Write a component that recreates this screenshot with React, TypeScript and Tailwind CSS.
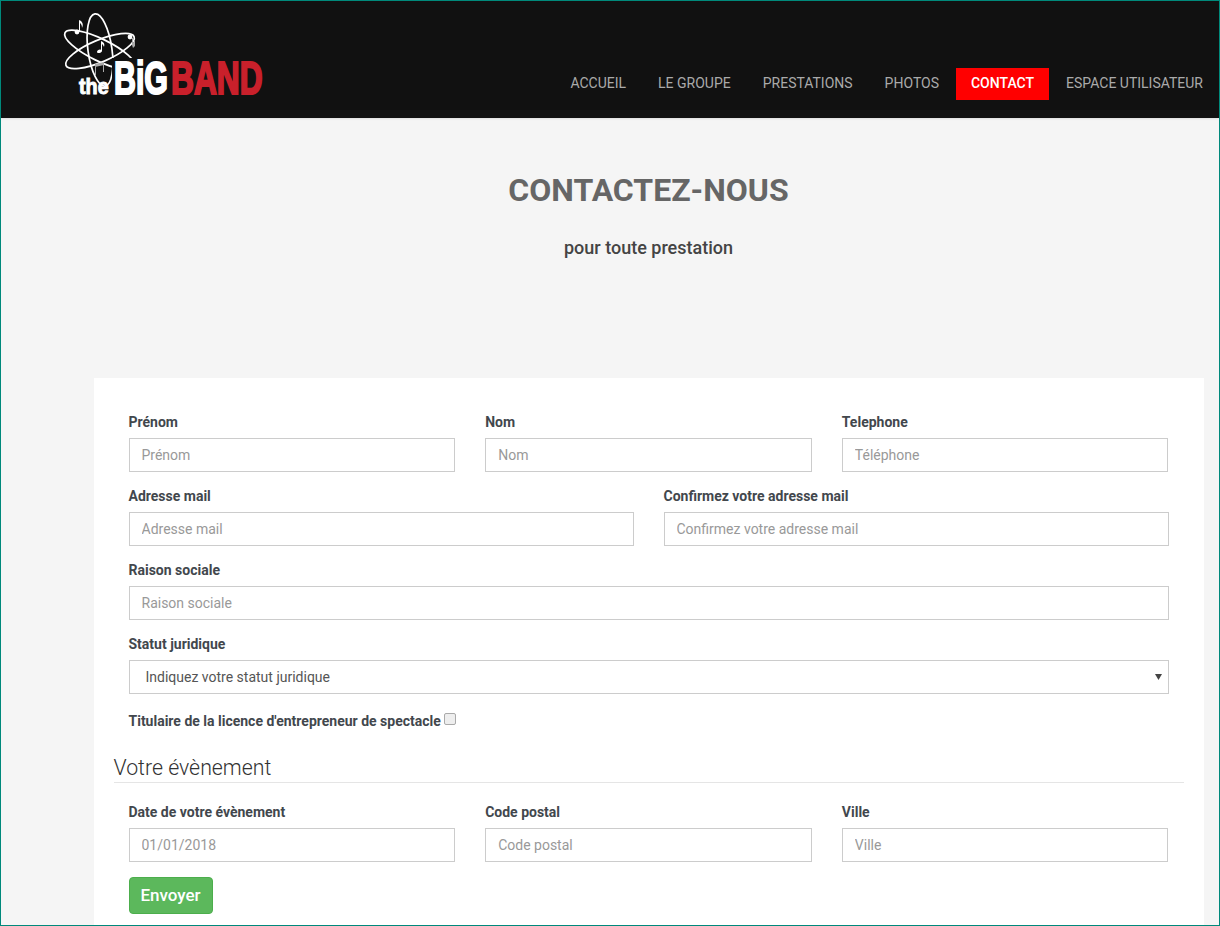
import React from "react";

const ROBOTO = "font-['Roboto',sans-serif]";

const navItems = ["Accueil", "Le groupe", "Prestations", "Photos", "Contact", "Espace utilisateur"];

// Atom + wordmark, the wordmark stays real text squeezed horizontally to the logo's widths
const Logo = () => (
  <svg width="210" height="100" viewBox="0 0 210 100" className="block" aria-label="the Big Band">
    <g fill="none" stroke="#fff" strokeWidth="1.7" transform="translate(-60 -8)">
      <ellipse cx="100" cy="50" rx="12" ry="36.5" transform="rotate(-8 100 50)" />
      <ellipse cx="100" cy="50" rx="39" ry="11" transform="rotate(26 100 50)" />
      <ellipse cx="100" cy="51" rx="37" ry="11" transform="rotate(-23 100 51)" />
    </g>
    <g fill="#fff" transform="translate(-60 -8)">
      <circle cx="77" cy="32" r="2.4" />
      <circle cx="130" cy="37" r="2.4" />
      <path d="M79 31 l0 -11 c3 1 5 4 3 8 c0 -3 -1 -4 -2 -5 l0 8 z" />
      <path d="M101 50 l0 -9 c3 1 4 3 3 6 c-1 -2 -1 -2 -2 -3 l0 7 c0 2 -5 3 -5 1 c0 -2 3 -3 4 -2 z" />
    </g>
    <g fill="#aaa" transform="translate(-60 -8)">
      <path d="M132 45 l0 -7 l1 0 l0 5 l2 -3 l0 6 l-2 2 z" />
      <path d="M95 64 l9 -2 l0 3 l-9 2 z M95 67 l1 0 l0 8 l-1 0 z M103 65 l1 0 l0 7 l-1 0 z" />
    </g>
    <g fontFamily="'Liberation Sans', sans-serif" fontWeight="700">
      <rect x="52" y="50" width="152" height="38" fill="#111" />
      <text transform="translate(19 86) scale(0.9 1)" fontSize="22" fill="#fff" stroke="#fff" strokeWidth="1">the</text>
      <text transform="translate(54 85.5) scale(0.66 1)" fontSize="46" fill="#fff" stroke="#fff" strokeWidth="2.2">BiG</text>
      <text transform="translate(111 85.5) scale(0.69 1)" fontSize="46" fill="#c9202b" stroke="#c9202b" strokeWidth="2.2">BAND</text>
    </g>
  </svg>
);

const Field = ({ label, placeholder }: { label: string; placeholder: string }) => (
  <div className="min-w-0">
    <label className="mb-[6px] block text-sm leading-5 font-bold text-[#42474d]">{label}</label>
    <input
      placeholder={placeholder}
      className="block h-[34px] w-full border border-[#ccc] bg-white px-3 text-sm text-[#555] outline-none placeholder:text-[#999]"
    />
  </div>
);

export default function App() {
  return (
    <div className={`flex h-[926px] flex-col overflow-hidden border border-[#00897b] bg-[#f5f5f5] ${ROBOTO}`}>
      <header className="flex h-[117px] shrink-0 items-end justify-between bg-[#111] shadow-[0_1px_2px_rgba(0,0,0,0.1)]">
        <div className="mb-[10px] ml-[59px]">
          <Logo />
        </div>
        <nav className="mr-px mb-[18px] flex gap-[2px]">
          {navItems.map((item) => (
            <a
              key={item}
              className={
                item === "Contact"
                  ? "h-8 bg-[#f00] px-[15px] text-sm leading-[30px] font-medium text-white uppercase"
                  : "h-8 px-[15px] text-sm leading-[30px] text-[#aaa] uppercase"
              }
            >
              {item}
            </a>
          ))}
        </nav>
      </header>

      <main className="flex min-h-0 flex-1 flex-col pr-[15.5px] pl-[92.5px]">
        <h1 className="mt-[56px] text-center text-[32px] leading-[33px] font-bold text-[#666]">CONTACTEZ-NOUS</h1>
        <p className="mt-[29px] text-center text-[18px] leading-6 font-medium text-[#444]">pour toute prestation</p>

        <section className="mt-[118px] flex-1 bg-white px-5 pt-[34px]">
          <div className="flex flex-col gap-[14px] px-[15px]">
            <div className="grid grid-cols-3 gap-[30px]">
              <Field label="Prénom" placeholder="Prénom" />
              <Field label="Nom" placeholder="Nom" />
              <Field label="Telephone" placeholder="Téléphone" />
            </div>
            <div className="grid grid-cols-2 gap-[30px]">
              <Field label="Adresse mail" placeholder="Adresse mail" />
              <Field label="Confirmez votre adresse mail" placeholder="Confirmez votre adresse mail" />
            </div>
            <Field label="Raison sociale" placeholder="Raison sociale" />
            <div>
              <label className="mb-[6px] block text-sm leading-5 font-bold text-[#42474d]">Statut juridique</label>
              <div className="relative">
                <select className="block h-[34px] w-full appearance-none border border-[#ccc] bg-white pl-4 text-sm text-[#555]">
                  <option>Indiquez votre statut juridique</option>
                </select>
                <svg width="7" height="6" viewBox="0 0 7 6" className="absolute top-[14px] right-[7px] text-[#444]">
                  <path d="M0 0 H7 L3.5 6 Z" fill="currentColor" />
                </svg>
              </div>
            </div>
            <div className="mt-[3px] flex h-5 items-center">
              <span className="text-sm leading-5 font-bold text-[#42474d]">Titulaire de la licence d'entrepreneur de spectacle</span>
              <input type="checkbox" className="mb-[5px] ml-[3px] h-3 w-3 appearance-none rounded-[2px] border border-[#aaa] bg-[#eee]" />
            </div>
          </div>

          <h2 className="mt-[23px] border-b border-[#e5e5e5] pb-px text-[21.3px] leading-[27px] font-light text-[#333]">Votre évènement</h2>

          <div className="mt-[19px] px-[15px]">
            <div className="grid grid-cols-3 gap-[30px]">
              <Field label="Date de votre évènement" placeholder="01/01/2018" />
              <Field label="Code postal" placeholder="Code postal" />
              <Field label="Ville" placeholder="Ville" />
            </div>
            <button className="mt-[15px] h-[37px] w-[84px] rounded border border-[#4cae4c] bg-[#5cb85c] text-[17px] font-medium text-white">
              Envoyer
            </button>
          </div>
        </section>
      </main>
    </div>
  );
}
